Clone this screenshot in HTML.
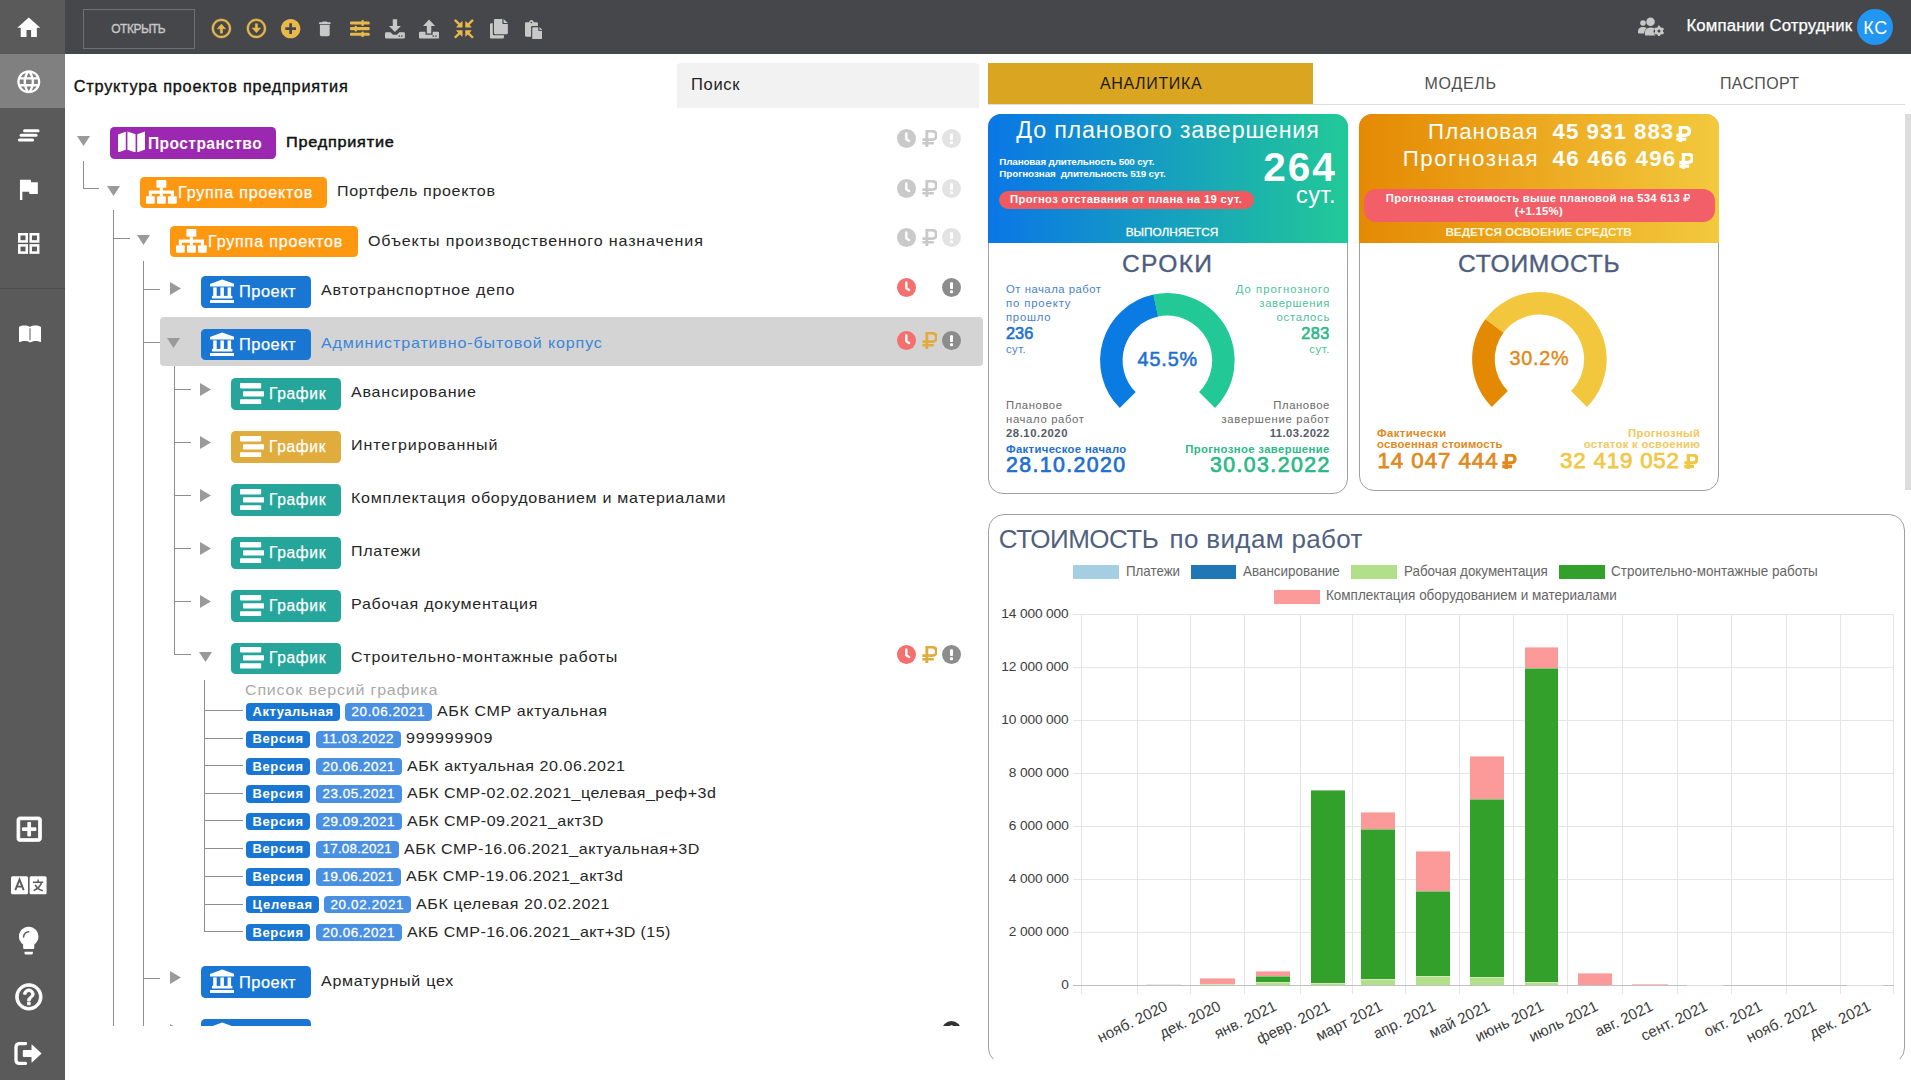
<!DOCTYPE html>
<html lang="ru"><head><meta charset="utf-8"><title>Структура проектов предприятия</title><style>*{margin:0;padding:0;box-sizing:content-box}
html,body{width:1911px;height:1080px;overflow:hidden;background:#fff}
body{position:relative;font-family:"Liberation Sans",sans-serif}
.b{position:absolute;display:block}
.t{position:absolute;white-space:pre;display:block}
</style></head><body>
<div class="b" style="left:0.00px;top:0.00px;width:1911.00px;height:54.00px;background:#45474b;"></div>
<div class="b" style="left:0.00px;top:0.00px;width:65.00px;height:1080.00px;background:#5a5a5a;"></div>
<div class="b" style="left:0.00px;top:54.00px;width:65.00px;height:54.00px;background:#808080;"></div>
<div class="b" style="left:0.00px;top:288.00px;width:65.00px;height:1.00px;background:#4b4b4b;"></div>
<svg class="b" style="left:14.70px;top:13.55px;" width="27.6" height="27.6" viewBox="0 0 24 24"><path fill="#fff" d="M10 20v-6h4v6h5v-8h3L12 3 2 12h3v8z"/></svg>
<svg class="b" style="left:14.70px;top:67.70px;" width="27.6" height="27.6" viewBox="0 0 24 24"><path fill="#fff" d="M11.99 2C6.47 2 2 6.48 2 12s4.47 10 9.99 10C17.52 22 22 17.52 22 12S17.52 2 11.99 2zm6.93 6h-2.95c-.32-1.25-.78-2.45-1.38-3.56 1.84.63 3.37 1.91 4.33 3.56zM12 4.04c.83 1.2 1.48 2.53 1.91 3.96h-3.82c.43-1.43 1.08-2.76 1.91-3.96zM4.26 14C4.1 13.36 4 12.69 4 12s.1-1.36.26-2h3.38c-.08.66-.14 1.32-.14 2 0 .68.06 1.34.14 2H4.26zm.82 2h2.95c.32 1.25.78 2.45 1.38 3.56-1.84-.63-3.37-1.9-4.33-3.56zm2.95-8H5.08c.96-1.66 2.49-2.93 4.33-3.56C8.81 5.55 8.35 6.75 8.03 8zM12 19.96c-.83-1.2-1.48-2.53-1.91-3.96h3.82c-.43 1.43-1.08 2.76-1.91 3.96zM14.34 14H9.66c-.09-.66-.16-1.32-.16-2 0-.68.07-1.35.16-2h4.68c.09.65.16 1.32.16 2 0 .68-.07 1.34-.16 2zm.25 5.56c.6-1.11 1.06-2.31 1.38-3.56h2.95c-.96 1.65-2.49 2.93-4.33 3.56zM16.36 14c.08-.66.14-1.32.14-2 0-.68-.06-1.34-.14-2h3.38c.16.64.26 1.31.26 2s-.1 1.36-.26 2h-3.38z"/></svg>
<svg class="b" style="left:17.00px;top:128.00px;" width="24" height="15" viewBox="0 0 24 15"><g fill="none" stroke="#fff" stroke-width="3.1" stroke-linecap="round"><path d="M7.6 2.8H21"/><path d="M4.2 7.3H19"/><path d="M2.5 12H15.500"/></g></svg>
<svg class="b" style="left:14.05px;top:175.20px;" width="28.6" height="28.6" viewBox="0 0 24 24"><path fill="#fff" d="M14.4 6L14 4H5v17h2v-7h5.6l.4 2h7V6z"/></svg>
<svg class="b" style="left:18.00px;top:233.00px;" width="22" height="21" viewBox="0 0 22 21"><g fill="none" stroke="#fff" stroke-width="2.5"><rect x="1.250" y="1.250" width="7.5" height="7.2"/><rect x="12.700" y="1.250" width="7.500" height="7.2"/><rect x="1.250" y="12.400" width="7.500" height="7.200"/><rect x="12.700" y="12.400" width="7.500" height="7.200"/></g></svg>
<svg class="b" style="left:17.75px;top:320.50px;" width="24" height="24" viewBox="0 0 24 24"><path fill="#fff" d="M21 5c-1.11-.35-2.33-.5-3.5-.5-1.95 0-4.05.4-5.5 1.5-1.45-1.1-3.55-1.5-5.5-1.5S2.45 4.9 1 6v14.65c0 .25.25.5.5.5.1 0 .15-.05.25-.05C3.1 20.45 5.05 20 6.5 20c1.95 0 4.05.4 5.5 1.5 1.35-.85 3.8-1.5 5.5-1.5 1.65 0 3.35.3 4.75 1.05.1.05.15.05.25.05.25 0 .5-.25.5-.5V6c-.6-.45-1.25-.75-2-1zM11.5 19.2V7.3h1v11.9z"/></svg>
<svg class="b" style="left:12.70px;top:812.60px;" width="32.4" height="32.4" viewBox="0 0 24 24"><path fill="#fff" stroke="#fff" stroke-width="0.700" d="M19 3H5c-1.11 0-2 .9-2 2v14c0 1.1.89 2 2 2h14c1.1 0 2-.9 2-2V5c0-1.1-.9-2-2-2zm0 16H5V5h14v14zm-8-2h2v-4h4v-2h-4V7h-2v4H7v2h4z"/></svg>
<svg class="b" style="left:11.00px;top:875.50px;" width="36" height="19" viewBox="0 0 36 19"><rect x="0" y="0.300" width="17" height="18" rx="1.500" fill="#fff"/><rect x="18.600" y="0.300" width="17" height="18" rx="1.500" fill="#fff"/><path d="M4.300 14.200L8.500 3.600L12.700 14.200M5.800 10.600H11.200" fill="none" stroke="#5a5a5a" stroke-width="1.900"/><g fill="none" stroke="#5a5a5a" stroke-width="1.500"><path d="M22 6.300H32.200M27.100 3.500V6.300M30.600 6.300C29.600 10 26.500 13 22.600 14.600M24.200 8.800C25.500 11.500 28.500 13.800 31.800 14.800"/></g></svg>
<svg class="b" style="left:11.90px;top:924.40px;" width="33.4" height="33.4" viewBox="0 0 24 24"><path fill="#fff" d="M9 21c0 .55.45 1 1 1h4c.55 0 1-.45 1-1v-1H9v1zm3-19C8.14 2 5 5.14 5 9c0 2.38 1.19 4.47 3 5.74V17c0 .55.45 1 1 1h6c.55 0 1-.45 1-1v-2.26c1.81-1.27 3-3.36 3-5.74 0-3.86-3.14-7-7-7z"/><path d="M8.300 9.300A3.800 3.800 0 0 1 12.100 5.500" stroke="#5a5a5a" stroke-width="1.100" fill="none" stroke-linecap="round"/><path d="M9 18.900H15" stroke="#5a5a5a" stroke-width="0.700"/></svg>
<svg class="b" style="left:12.70px;top:981.40px;" width="31.7" height="31.7" viewBox="0 0 24 24"><path fill="#fff" stroke="#fff" stroke-width="0.700" d="M11 18h2v-2h-2v2zm1-16C6.48 2 2 6.48 2 12s4.48 10 10 10 10-4.48 10-10S17.52 2 12 2zm0 18c-4.41 0-8-3.59-8-8s3.59-8 8-8 8 3.59 8 8-3.59 8-8 8zm0-14c-2.21 0-4 1.79-4 4h2c0-1.1.9-2 2-2s2 .9 2 2c0 2-3 1.75-3 5h2c0-2.25 3-2.5 3-5 0-2.21-1.79-4-4-4z"/></svg>
<svg class="b" style="left:14.00px;top:1042.00px;" width="29" height="23" viewBox="0 0 29 23"><path d="M11.500 1.600H5.500Q2 1.600 2 5.100V17.900Q2 21.400 5.500 21.400H11.500" fill="none" stroke="#fff" stroke-width="3.300" stroke-linecap="round"/><path d="M9.800 8H17.500V3.200Q17.500 2 18.500 2.900L27.600 11.500L18.500 20.100Q17.500 21 17.500 19.800V15H9.800Q8.800 15 8.800 14V9Q8.800 8 9.800 8Z" fill="#fff"/></svg>
<div class="b" style="left:83px;top:9px;width:110px;height:37.500px;border:1px solid #6e7073"></div>
<span class="t" style="left:111.25px;top:23.00px;font-size:12px;line-height:12px;color:#c8c8c8;letter-spacing:-0.498px;-webkit-text-stroke:0.35px #c8c8c8;">ОТКРЫТЬ</span>
<svg class="b" style="left:209.90px;top:17.20px;" width="22.8" height="22.8" viewBox="0 0 24 24"><path fill="#e8b84b" stroke="#e8b84b" stroke-width="0.500" d="M12 20c-4.41 0-8-3.59-8-8s3.590-8 8-8 8 3.590 8 8-3.590 8-8 8m0 2c5.520 0 10-4.480 10-10S17.520 2 12 2 2 6.480 2 12s4.480 10 10 10zm-1.200-9.500V17h2.400v-4.500h3.300L12 7.500l-4.500 5h3.300z"/></svg>
<svg class="b" style="left:244.85px;top:17.20px;" width="22.8" height="22.8" viewBox="0 0 24 24"><path fill="#e8b84b" stroke="#e8b84b" stroke-width="0.500" d="M12 4c4.410 0 8 3.590 8 8s-3.590 8-8 8-8-3.590-8-8 3.590-8 8-8m0-2C6.480 2 2 6.480 2 12s4.480 10 10 10 10-4.480 10-10S17.520 2 12 2zm1.200 9.500V7h-2.400v4.500H7.500l4.500 5 4.500-5h-3.300z"/></svg>
<svg class="b" style="left:279.05px;top:16.95px;" width="23.3" height="23.3" viewBox="0 0 24 24"><path fill="#e8b84b" d="M12 2C6.48 2 2 6.48 2 12s4.48 10 10 10 10-4.480 10-10S17.520 2 12 2zm5.500 11.400h-4.100v4.100h-2.800v-4.100H6.500v-2.800h4.100V6.500h2.800v4.100h4.100v2.800z"/></svg>
<svg class="b" style="left:314.90px;top:18.65px;" width="19.6" height="19.6" viewBox="0 0 24 24"><path fill="#c8c8c8" d="M6 19c0 1.100.9 2 2 2h8c1.100 0 2-.9 2-2V7H6v12zM19 4h-3.500l-1-1h-5l-1 1H5v2h14V4z"/></svg>
<svg class="b" style="left:350.30px;top:19.70px;" width="19.7" height="17.3" viewBox="0 0 21.500 17" preserveAspectRatio="none"><g fill="#e8b84b"><rect x="0" y="1.400" width="21.500" height="3" rx="1.200"/><rect x="0" y="7" width="21.500" height="3" rx="1.200"/><rect x="0" y="12.600" width="21.500" height="3" rx="1.200"/><rect x="12.500" y="0" width="2.600" height="5.800" rx="1"/><rect x="5" y="5.600" width="2.600" height="5.800" rx="1"/><rect x="12.500" y="11.200" width="2.600" height="5.800" rx="1"/></g></svg>
<svg class="b" style="left:385.00px;top:19.30px;" width="19.9" height="19.5" viewBox="0 0 21 21" preserveAspectRatio="none"><g fill="#c8c8c8"><path d="M8.200 0.300H12.800V7.500H16.800L10.500 14L4.200 7.500H8.200Z"/><path d="M1.200 14.300H5.800L8.500 17H12.500L15.200 14.300H19.800Q21 14.300 21 15.500V19.800Q21 21 19.800 21H1.200Q0 21 0 19.800V15.500Q0 14.300 1.200 14.300Z"/></g><circle cx="17.800" cy="18.300" r="0.900" fill="#45474b"/><circle cx="15" cy="18.300" r="0.900" fill="#45474b"/></svg>
<svg class="b" style="left:419.30px;top:19.30px;" width="20.1" height="19.5" viewBox="0 0 21 21" preserveAspectRatio="none"><g fill="#c8c8c8"><path d="M8.200 15.500H12.800V7.500H16.800L10.500 0.500L4.200 7.500H8.200Z"/><path d="M1.200 13.800H6.700V17H14.300V13.800H19.800Q21 13.800 21 15V19.800Q21 21 19.800 21H1.200Q0 21 0 19.800V15Q0 13.800 1.200 13.800Z"/></g><circle cx="17.800" cy="18.300" r="0.900" fill="#45474b"/><circle cx="15" cy="18.300" r="0.900" fill="#45474b"/></svg>
<svg class="b" style="left:454.30px;top:19.20px;" width="19.8" height="19.6" viewBox="0 0 20 20" preserveAspectRatio="none"><g fill="#e8b84b"><path d="M0 1.700L1.700 0L6 4.300L7.800 2.500Q8.600 1.800 8.600 2.900V8.600H2.900Q1.800 8.600 2.500 7.800L4.300 6Z"/><path d="M20 1.700L18.300 0L14 4.300L12.200 2.500Q11.400 1.800 11.400 2.900V8.600H17.100Q18.200 8.600 17.500 7.800L15.700 6Z"/><path d="M0 18.300L1.700 20L6 15.700L7.800 17.500Q8.600 18.200 8.600 17.100V11.400H2.900Q1.800 11.400 2.500 12.200L4.300 14Z"/><path d="M20 18.300L18.300 20L14 15.700L12.200 17.500Q11.400 18.200 11.400 17.100V11.400H17.100Q18.200 11.400 17.500 12.200L15.700 14Z"/></g></svg>
<svg class="b" style="left:490.00px;top:19.30px;" width="17.9" height="19.5" viewBox="0 0 18.500 21" preserveAspectRatio="none"><g fill="#c8c8c8"><path d="M5.200 0H12.800V4.600Q12.800 5.300 13.500 5.300H18.500V15.200Q18.500 16.300 17.400 16.300H5.200Q4.100 16.300 4.100 15.200V1.100Q4.100 0 5.200 0Z"/><path d="M14 0L18.500 4.200H14.500Q14 4.200 14 3.700Z"/><path d="M0 5.800Q0 4.700 1.100 4.700H2.900V16.300Q2.900 17.500 4.100 17.500H14.400V19.900Q14.400 21 13.300 21H1.100Q0 21 0 19.900Z"/></g></svg>
<svg class="b" style="left:524.60px;top:19.90px;" width="17.6" height="19.2" viewBox="0 0 18 21" preserveAspectRatio="none"><g fill="#c8c8c8"><path d="M1.100 2.500H4.200Q4.600 0 6.600 0Q8.600 0 9 2.500H12.100Q13.200 2.500 13.200 3.600V6.500H7.400Q6.200 6.500 6.200 7.700V18.200H1.100Q0 18.200 0 17.100V3.600Q0 2.500 1.100 2.500Z"/><path d="M8.500 7.800H13.600V11.300Q13.600 12 14.300 12H18V19.900Q18 21 16.900 21H8.500Q7.400 21 7.400 19.900V8.900Q7.400 7.800 8.500 7.800Z"/><path d="M14.800 7.800L18 10.900H15.300Q14.800 10.900 14.800 10.400Z"/></g><circle cx="6.600" cy="2.700" r="0.900" fill="#45474b"/></svg>
<svg class="b" style="left:1637.50px;top:17.00px;" width="26" height="19" viewBox="0 0 26 19"><g fill="#c8c8c8"><circle cx="5" cy="6" r="2.800"/><path d="M0 14.500Q0 10 5 10Q7.500 10 8.500 11.200Q6 13 6 16.500H1Q0 16.500 0 15.500Z"/><circle cx="12.500" cy="4.800" r="4.300"/><path d="M6.800 16.800Q6.800 10.500 12.500 10.500Q15 10.500 16.500 11.600Q15.200 13.500 15.800 15.800Q16.300 17.300 17.500 18.500H8Q6.800 18.500 6.800 17.300Z"/><circle cx="21" cy="14" r="4" /><g stroke="#c8c8c8" stroke-width="2.200"><path d="M21 8.800V19.200M16.500 11.400L25.500 16.600M16.500 16.600L25.500 11.400"/></g></g><circle cx="21" cy="14" r="1.500" fill="#45474b"/></svg>
<span class="t" style="left:1686.40px;top:18.00px;font-size:16.8px;line-height:16.8px;color:#fff;letter-spacing:0.138px;-webkit-text-stroke:0.25px #fff;">Компании Сотрудник</span>
<div class="b" style="left:1857.20px;top:8.80px;width:36.00px;height:36.00px;background:#2196f3;border-radius:18px;"></div>
<span class="t" style="left:1863.20px;top:19.30px;font-size:18px;line-height:18px;color:#fff;letter-spacing:0.718px;">КС</span>
<span class="t" style="left:73.75px;top:78.45px;font-size:16.3px;line-height:16.3px;color:#111;letter-spacing:0.767px;-webkit-text-stroke:0.35px #111;">Структура проектов предприятия</span>
<div class="b" style="left:677.00px;top:63.00px;width:301.50px;height:44.50px;background:#f2f2f2;border-radius:4px 4px 0 0;"></div>
<span class="t" style="left:691.00px;top:75.75px;font-size:16.5px;line-height:16.5px;color:#222;letter-spacing:0.695px;">Поиск</span>
<div class="b" style="left:65px;top:110px;width:920px;height:915.500px;overflow:hidden"><div class="b" style="left:-65px;top:-110px;width:1911px;height:1080px">
<div class="b" style="left:160.00px;top:316.50px;width:823.00px;height:49.00px;background:#d4d4d4;border-radius:4px;"></div>
<div class="b" style="left:83.00px;top:161.00px;width:1.00px;height:27.50px;background:#8e8e8e;"></div>
<div class="b" style="left:83.50px;top:188.00px;width:15.00px;height:1.00px;background:#8e8e8e;"></div>
<div class="b" style="left:113.00px;top:210.00px;width:1.00px;height:820.00px;background:#8e8e8e;"></div>
<div class="b" style="left:113.50px;top:238.00px;width:16.00px;height:1.00px;background:#8e8e8e;"></div>
<div class="b" style="left:143.00px;top:260.50px;width:1.00px;height:769.50px;background:#8e8e8e;"></div>
<div class="b" style="left:143.50px;top:288.50px;width:16.50px;height:1.00px;background:#8e8e8e;"></div>
<div class="b" style="left:143.50px;top:341.50px;width:16.50px;height:1.00px;background:#8e8e8e;"></div>
<div class="b" style="left:143.50px;top:978.00px;width:16.50px;height:1.00px;background:#8e8e8e;"></div>
<div class="b" style="left:174.00px;top:366.00px;width:1.00px;height:288.50px;background:#8e8e8e;"></div>
<div class="b" style="left:174.50px;top:388.50px;width:16.25px;height:1.00px;background:#8e8e8e;"></div>
<div class="b" style="left:174.50px;top:441.50px;width:16.25px;height:1.00px;background:#8e8e8e;"></div>
<div class="b" style="left:174.50px;top:494.50px;width:16.25px;height:1.00px;background:#8e8e8e;"></div>
<div class="b" style="left:174.50px;top:547.50px;width:16.25px;height:1.00px;background:#8e8e8e;"></div>
<div class="b" style="left:174.50px;top:600.50px;width:16.25px;height:1.00px;background:#8e8e8e;"></div>
<div class="b" style="left:174.50px;top:654.00px;width:16.25px;height:1.00px;background:#8e8e8e;"></div>
<div class="b" style="left:204.00px;top:680.00px;width:1.00px;height:251.50px;background:#8e8e8e;"></div>
<div class="b" style="left:204.50px;top:710.00px;width:38.00px;height:1.00px;background:#8e8e8e;"></div>
<div class="b" style="left:204.50px;top:737.50px;width:38.00px;height:1.00px;background:#8e8e8e;"></div>
<div class="b" style="left:204.50px;top:765.00px;width:38.00px;height:1.00px;background:#8e8e8e;"></div>
<div class="b" style="left:204.50px;top:792.75px;width:38.00px;height:1.00px;background:#8e8e8e;"></div>
<div class="b" style="left:204.50px;top:820.25px;width:38.00px;height:1.00px;background:#8e8e8e;"></div>
<div class="b" style="left:204.50px;top:848.00px;width:38.00px;height:1.00px;background:#8e8e8e;"></div>
<div class="b" style="left:204.50px;top:875.75px;width:38.00px;height:1.00px;background:#8e8e8e;"></div>
<div class="b" style="left:204.50px;top:903.50px;width:38.00px;height:1.00px;background:#8e8e8e;"></div>
<div class="b" style="left:204.50px;top:931.00px;width:38.00px;height:1.00px;background:#8e8e8e;"></div>
<svg class="b" style="left:76.80px;top:136.00px;" width="13" height="10" viewBox="0 0 13 10"><path d="M0 0H13L6.500 10Z" fill="#9a9a9a"/></svg>
<svg class="b" style="left:107.00px;top:185.50px;" width="13" height="10" viewBox="0 0 13 10"><path d="M0 0H13L6.500 10Z" fill="#9a9a9a"/></svg>
<svg class="b" style="left:137.00px;top:234.50px;" width="13" height="10" viewBox="0 0 13 10"><path d="M0 0H13L6.500 10Z" fill="#9a9a9a"/></svg>
<svg class="b" style="left:170.00px;top:282.00px;" width="11" height="13" viewBox="0 0 11 13"><path d="M0 0V13L11 6.500Z" fill="#9a9a9a"/></svg>
<svg class="b" style="left:167.00px;top:337.50px;" width="13" height="10" viewBox="0 0 13 10"><path d="M0 0H13L6.500 10Z" fill="#9a9a9a"/></svg>
<svg class="b" style="left:200.00px;top:382.90px;" width="11" height="13" viewBox="0 0 11 13"><path d="M0 0V13L11 6.500Z" fill="#9a9a9a"/></svg>
<svg class="b" style="left:200.00px;top:435.90px;" width="11" height="13" viewBox="0 0 11 13"><path d="M0 0V13L11 6.500Z" fill="#9a9a9a"/></svg>
<svg class="b" style="left:200.00px;top:488.90px;" width="11" height="13" viewBox="0 0 11 13"><path d="M0 0V13L11 6.500Z" fill="#9a9a9a"/></svg>
<svg class="b" style="left:200.00px;top:541.90px;" width="11" height="13" viewBox="0 0 11 13"><path d="M0 0V13L11 6.500Z" fill="#9a9a9a"/></svg>
<svg class="b" style="left:200.00px;top:594.90px;" width="11" height="13" viewBox="0 0 11 13"><path d="M0 0V13L11 6.500Z" fill="#9a9a9a"/></svg>
<svg class="b" style="left:198.75px;top:652.00px;" width="13" height="10" viewBox="0 0 13 10"><path d="M0 0H13L6.500 10Z" fill="#9a9a9a"/></svg>
<svg class="b" style="left:170.00px;top:970.75px;" width="11" height="13" viewBox="0 0 11 13"><path d="M0 0V13L11 6.500Z" fill="#9a9a9a"/></svg>
<svg class="b" style="left:170.00px;top:1023.50px;" width="11" height="13" viewBox="0 0 11 13"><path d="M0 0V13L11 6.500Z" fill="#9a9a9a"/></svg>
<div class="b" style="left:110.00px;top:127.00px;width:165.80px;height:31.50px;background:#9c27b0;border-radius:4.5px;"></div>
<svg class="b" style="left:117.5px;top:130.7px" width="27" height="21.8" viewBox="0 0 21.5 20" preserveAspectRatio="none"><g fill="#fff"><path d="M0 3.200L6.200 0.600V17.200L0 19.800Z"/><path d="M7.500 0.500L14 3V19.700L7.500 17.200Z"/><path d="M15.300 3L21.500 0.400V17L15.300 19.700Z"/></g></svg>
<span class="t" style="left:147.50px;top:134.95px;font-size:17.3px;line-height:17.3px;color:#fff;letter-spacing:0.477px;font-weight:bold;transform:scaleX(0.9000);transform-origin:0 0;">Пространство</span>
<span class="t" style="left:285.50px;top:135.10px;font-size:14.8px;line-height:14.8px;color:#111;letter-spacing:0.678px;-webkit-text-stroke:0.45px #111;transform:scaleX(1.1000);transform-origin:0 0;">Предприятие</span>
<div class="b" style="left:140.30px;top:177.00px;width:186.40px;height:31.00px;background:#ff9811;border-radius:4.5px;"></div>
<svg class="b" style="left:146.25px;top:180.00px;" width="30.75" height="23.75" viewBox="0 0 26 20"><g fill="#fff"><rect x="8.800" y="0" width="8.400" height="6.600" rx="0.800"/><rect x="0" y="13.800" width="7.400" height="6.200" rx="0.800"/><rect x="9.300" y="13.800" width="7.400" height="6.200" rx="0.800"/><rect x="18.600" y="13.800" width="7.400" height="6.200" rx="0.800"/><path d="M11.700 6.600H14.300V8.900H23.600V13.800H21V11.500H14.300V13.800H11.700V11.500H5V13.800H2.400V8.900H11.700Z"/></g></svg>
<span class="t" style="left:178.00px;top:183.85px;font-size:17.3px;line-height:17.3px;color:#fff;letter-spacing:0.889px;-webkit-text-stroke:0.25px #fff;transform:scaleX(0.9300);transform-origin:0 0;">Группа проектов</span>
<span class="t" style="left:337.00px;top:184.10px;font-size:14.6px;line-height:14.6px;color:#262626;letter-spacing:0.593px;transform:scaleX(1.1000);transform-origin:0 0;">Портфель проектов</span>
<div class="b" style="left:170.20px;top:226.20px;width:187.60px;height:31.30px;background:#ff9811;border-radius:4.5px;"></div>
<svg class="b" style="left:176.25px;top:229.20px;" width="30.75" height="23.75" viewBox="0 0 26 20"><g fill="#fff"><rect x="8.800" y="0" width="8.400" height="6.600" rx="0.800"/><rect x="0" y="13.800" width="7.400" height="6.200" rx="0.800"/><rect x="9.300" y="13.800" width="7.400" height="6.200" rx="0.800"/><rect x="18.600" y="13.800" width="7.400" height="6.200" rx="0.800"/><path d="M11.700 6.600H14.300V8.900H23.600V13.800H21V11.500H14.300V13.800H11.700V11.500H5V13.800H2.400V8.900H11.700Z"/></g></svg>
<span class="t" style="left:208.00px;top:233.15px;font-size:17.3px;line-height:17.3px;color:#fff;letter-spacing:0.889px;-webkit-text-stroke:0.25px #fff;transform:scaleX(0.9300);transform-origin:0 0;">Группа проектов</span>
<span class="t" style="left:367.50px;top:234.10px;font-size:14.6px;line-height:14.6px;color:#262626;letter-spacing:0.795px;transform:scaleX(1.1000);transform-origin:0 0;">Объекты производственного назначения</span>
<div class="b" style="left:201.00px;top:276.00px;width:109.75px;height:31.50px;background:#1976d2;border-radius:4.5px;"></div>
<svg class="b" style="left:210.00px;top:278.70px;" width="24.4" height="24.4" viewBox="0 0 24.400 23.600"><g fill="#fff"><path d="M12.200 0L24.400 4.600V7H0V4.600Z"/><rect x="3.200" y="8" width="3.500" height="9.500"/><rect x="10.400" y="8" width="3.500" height="9.500"/><rect x="17.600" y="8" width="3.500" height="9.500"/><rect x="2" y="16.500" width="20.400" height="2.600"/><rect x="0" y="20.600" width="24.400" height="3" rx="0.600"/></g></svg>
<span class="t" style="left:239.25px;top:283.35px;font-size:17.3px;line-height:17.3px;color:#fff;letter-spacing:0.518px;-webkit-text-stroke:0.25px #fff;transform:scaleX(0.9500);transform-origin:0 0;">Проект</span>
<span class="t" style="left:321.00px;top:282.95px;font-size:14.6px;line-height:14.6px;color:#262626;letter-spacing:0.729px;transform:scaleX(1.1000);transform-origin:0 0;">Автотранспортное депо</span>
<div class="b" style="left:201.00px;top:328.90px;width:109.75px;height:31.50px;background:#1976d2;border-radius:4.5px;"></div>
<svg class="b" style="left:210.00px;top:331.60px;" width="24.4" height="24.4" viewBox="0 0 24.400 23.600"><g fill="#fff"><path d="M12.200 0L24.400 4.600V7H0V4.600Z"/><rect x="3.200" y="8" width="3.500" height="9.500"/><rect x="10.400" y="8" width="3.500" height="9.500"/><rect x="17.600" y="8" width="3.500" height="9.500"/><rect x="2" y="16.500" width="20.400" height="2.600"/><rect x="0" y="20.600" width="24.400" height="3" rx="0.600"/></g></svg>
<span class="t" style="left:239.25px;top:336.25px;font-size:17.3px;line-height:17.3px;color:#fff;letter-spacing:0.518px;-webkit-text-stroke:0.25px #fff;transform:scaleX(0.9500);transform-origin:0 0;">Проект</span>
<span class="t" style="left:321.00px;top:335.85px;font-size:14.6px;line-height:14.6px;color:#3a86d8;letter-spacing:0.782px;transform:scaleX(1.1000);transform-origin:0 0;">Административно-бытовой корпус</span>
<div class="b" style="left:201.00px;top:966.20px;width:109.75px;height:31.50px;background:#1976d2;border-radius:4.5px;"></div>
<svg class="b" style="left:210.00px;top:968.90px;" width="24.4" height="24.4" viewBox="0 0 24.400 23.600"><g fill="#fff"><path d="M12.200 0L24.400 4.600V7H0V4.600Z"/><rect x="3.200" y="8" width="3.500" height="9.500"/><rect x="10.400" y="8" width="3.500" height="9.500"/><rect x="17.600" y="8" width="3.500" height="9.500"/><rect x="2" y="16.500" width="20.400" height="2.600"/><rect x="0" y="20.600" width="24.400" height="3" rx="0.600"/></g></svg>
<span class="t" style="left:239.25px;top:973.55px;font-size:17.3px;line-height:17.3px;color:#fff;letter-spacing:0.518px;-webkit-text-stroke:0.25px #fff;transform:scaleX(0.9500);transform-origin:0 0;">Проект</span>
<span class="t" style="left:321.00px;top:974.15px;font-size:14.6px;line-height:14.6px;color:#262626;letter-spacing:0.646px;transform:scaleX(1.1000);transform-origin:0 0;">Арматурный цех</span>
<div class="b" style="left:201.00px;top:1019.00px;width:109.75px;height:31.00px;background:#1976d2;border-radius:4.5px;"></div>
<svg class="b" style="left:210.00px;top:1021.70px;" width="24.4" height="24.4" viewBox="0 0 24.400 23.600"><g fill="#fff"><path d="M12.200 0L24.400 4.600V7H0V4.600Z"/><rect x="3.200" y="8" width="3.500" height="9.500"/><rect x="10.400" y="8" width="3.500" height="9.500"/><rect x="17.600" y="8" width="3.500" height="9.500"/><rect x="2" y="16.500" width="20.400" height="2.600"/><rect x="0" y="20.600" width="24.400" height="3" rx="0.600"/></g></svg>
<div class="b" style="left:231.00px;top:378.00px;width:109.75px;height:31.50px;background:#26a69a;border-radius:4.5px;"></div>
<svg class="b" style="left:240.00px;top:382.50px;" width="24.2" height="21.5" viewBox="0 0 24.200 21.500"><g fill="#fff"><rect x="0" y="0" width="21.200" height="5.400" rx="0.800"/><rect x="3" y="8.200" width="21.200" height="5.400" rx="0.800"/><rect x="0" y="16.300" width="21.200" height="5.200" rx="0.800"/></g></svg>
<span class="t" style="left:269.25px;top:384.95px;font-size:17.3px;line-height:17.3px;color:#fff;letter-spacing:0.735px;-webkit-text-stroke:0.25px #fff;transform:scaleX(0.9000);transform-origin:0 0;">График</span>
<span class="t" style="left:350.50px;top:384.95px;font-size:14.6px;line-height:14.6px;color:#262626;letter-spacing:0.698px;transform:scaleX(1.1000);transform-origin:0 0;">Авансирование</span>
<div class="b" style="left:231.00px;top:431.00px;width:109.75px;height:31.50px;background:#e0ac3e;border-radius:4.5px;"></div>
<svg class="b" style="left:240.00px;top:435.50px;" width="24.2" height="21.5" viewBox="0 0 24.200 21.500"><g fill="#fff"><rect x="0" y="0" width="21.200" height="5.400" rx="0.800"/><rect x="3" y="8.200" width="21.200" height="5.400" rx="0.800"/><rect x="0" y="16.300" width="21.200" height="5.200" rx="0.800"/></g></svg>
<span class="t" style="left:269.25px;top:437.95px;font-size:17.3px;line-height:17.3px;color:#fff;letter-spacing:0.735px;-webkit-text-stroke:0.25px #fff;transform:scaleX(0.9000);transform-origin:0 0;">График</span>
<span class="t" style="left:350.50px;top:437.95px;font-size:14.6px;line-height:14.6px;color:#262626;letter-spacing:0.832px;transform:scaleX(1.1000);transform-origin:0 0;">Интегрированный</span>
<div class="b" style="left:231.00px;top:484.00px;width:109.75px;height:31.50px;background:#26a69a;border-radius:4.5px;"></div>
<svg class="b" style="left:240.00px;top:488.50px;" width="24.2" height="21.5" viewBox="0 0 24.200 21.500"><g fill="#fff"><rect x="0" y="0" width="21.200" height="5.400" rx="0.800"/><rect x="3" y="8.200" width="21.200" height="5.400" rx="0.800"/><rect x="0" y="16.300" width="21.200" height="5.200" rx="0.800"/></g></svg>
<span class="t" style="left:269.25px;top:490.95px;font-size:17.3px;line-height:17.3px;color:#fff;letter-spacing:0.735px;-webkit-text-stroke:0.25px #fff;transform:scaleX(0.9000);transform-origin:0 0;">График</span>
<span class="t" style="left:350.50px;top:490.95px;font-size:14.6px;line-height:14.6px;color:#262626;letter-spacing:0.654px;transform:scaleX(1.1000);transform-origin:0 0;">Комплектация оборудованием и материалами</span>
<div class="b" style="left:231.00px;top:537.00px;width:109.75px;height:31.50px;background:#26a69a;border-radius:4.5px;"></div>
<svg class="b" style="left:240.00px;top:541.50px;" width="24.2" height="21.5" viewBox="0 0 24.200 21.500"><g fill="#fff"><rect x="0" y="0" width="21.200" height="5.400" rx="0.800"/><rect x="3" y="8.200" width="21.200" height="5.400" rx="0.800"/><rect x="0" y="16.300" width="21.200" height="5.200" rx="0.800"/></g></svg>
<span class="t" style="left:269.25px;top:543.95px;font-size:17.3px;line-height:17.3px;color:#fff;letter-spacing:0.735px;-webkit-text-stroke:0.25px #fff;transform:scaleX(0.9000);transform-origin:0 0;">График</span>
<span class="t" style="left:350.50px;top:543.95px;font-size:14.6px;line-height:14.6px;color:#262626;letter-spacing:0.661px;transform:scaleX(1.1000);transform-origin:0 0;">Платежи</span>
<div class="b" style="left:231.00px;top:590.00px;width:109.75px;height:31.50px;background:#26a69a;border-radius:4.5px;"></div>
<svg class="b" style="left:240.00px;top:594.50px;" width="24.2" height="21.5" viewBox="0 0 24.200 21.500"><g fill="#fff"><rect x="0" y="0" width="21.200" height="5.400" rx="0.800"/><rect x="3" y="8.200" width="21.200" height="5.400" rx="0.800"/><rect x="0" y="16.300" width="21.200" height="5.200" rx="0.800"/></g></svg>
<span class="t" style="left:269.25px;top:596.95px;font-size:17.3px;line-height:17.3px;color:#fff;letter-spacing:0.735px;-webkit-text-stroke:0.25px #fff;transform:scaleX(0.9000);transform-origin:0 0;">График</span>
<span class="t" style="left:350.50px;top:596.95px;font-size:14.6px;line-height:14.6px;color:#262626;letter-spacing:0.669px;transform:scaleX(1.1000);transform-origin:0 0;">Рабочая документация</span>
<div class="b" style="left:231.00px;top:642.50px;width:109.75px;height:31.50px;background:#26a69a;border-radius:4.5px;"></div>
<svg class="b" style="left:240.00px;top:647.00px;" width="24.2" height="21.5" viewBox="0 0 24.200 21.500"><g fill="#fff"><rect x="0" y="0" width="21.200" height="5.400" rx="0.800"/><rect x="3" y="8.200" width="21.200" height="5.400" rx="0.800"/><rect x="0" y="16.300" width="21.200" height="5.200" rx="0.800"/></g></svg>
<span class="t" style="left:269.25px;top:649.45px;font-size:17.3px;line-height:17.3px;color:#fff;letter-spacing:0.735px;-webkit-text-stroke:0.25px #fff;transform:scaleX(0.9000);transform-origin:0 0;">График</span>
<span class="t" style="left:350.50px;top:650.45px;font-size:14.6px;line-height:14.6px;color:#262626;letter-spacing:0.680px;transform:scaleX(1.1000);transform-origin:0 0;">Строительно-монтажные работы</span>
<span class="t" style="left:245.00px;top:682.85px;font-size:14.6px;line-height:14.6px;color:#aaa;letter-spacing:0.715px;transform:scaleX(1.1000);transform-origin:0 0;">Список версий графика</span>
<div class="b" style="left:246.00px;top:703.20px;width:93.50px;height:17.40px;background:#1976d2;border-radius:4px;"></div>
<span class="t" style="left:252.50px;top:704.80px;font-size:13px;line-height:13px;color:#fff;letter-spacing:0.523px;font-weight:bold;">Актуальная</span>
<div class="b" style="left:345.00px;top:703.20px;width:86.50px;height:17.40px;background:#4a90e2;border-radius:4px;"></div>
<span class="t" style="left:351.50px;top:704.70px;font-size:13.4px;line-height:13.4px;color:#fff;letter-spacing:0.659px;-webkit-text-stroke:0.3px #fff;">20.06.2021</span>
<span class="t" style="left:437.00px;top:704.15px;font-size:14.6px;line-height:14.6px;color:#262626;letter-spacing:0.549px;transform:scaleX(1.1000);transform-origin:0 0;">АБК СМР актуальная</span>
<div class="b" style="left:246.00px;top:730.50px;width:63.50px;height:17.40px;background:#1976d2;border-radius:4px;"></div>
<span class="t" style="left:252.50px;top:732.10px;font-size:13px;line-height:13px;color:#fff;letter-spacing:0.626px;font-weight:bold;">Версия</span>
<div class="b" style="left:316.00px;top:730.50px;width:84.50px;height:17.40px;background:#4a90e2;border-radius:4px;"></div>
<span class="t" style="left:322.50px;top:732.00px;font-size:13.4px;line-height:13.4px;color:#fff;letter-spacing:0.548px;-webkit-text-stroke:0.3px #fff;">11.03.2022</span>
<span class="t" style="left:405.50px;top:731.45px;font-size:14.6px;line-height:14.6px;color:#262626;letter-spacing:0.694px;transform:scaleX(1.1000);transform-origin:0 0;">999999909</span>
<div class="b" style="left:246.00px;top:758.00px;width:63.50px;height:17.40px;background:#1976d2;border-radius:4px;"></div>
<span class="t" style="left:252.50px;top:759.60px;font-size:13px;line-height:13px;color:#fff;letter-spacing:0.626px;font-weight:bold;">Версия</span>
<div class="b" style="left:316.00px;top:758.00px;width:85.50px;height:17.40px;background:#4a90e2;border-radius:4px;"></div>
<span class="t" style="left:322.50px;top:759.50px;font-size:13.4px;line-height:13.4px;color:#fff;letter-spacing:0.548px;-webkit-text-stroke:0.3px #fff;">20.06.2021</span>
<span class="t" style="left:407.00px;top:758.95px;font-size:14.6px;line-height:14.6px;color:#262626;letter-spacing:0.507px;transform:scaleX(1.1000);transform-origin:0 0;">АБК актуальная 20.06.2021</span>
<div class="b" style="left:246.00px;top:785.30px;width:63.50px;height:17.40px;background:#1976d2;border-radius:4px;"></div>
<span class="t" style="left:252.50px;top:786.90px;font-size:13px;line-height:13px;color:#fff;letter-spacing:0.626px;font-weight:bold;">Версия</span>
<div class="b" style="left:316.00px;top:785.30px;width:85.50px;height:17.40px;background:#4a90e2;border-radius:4px;"></div>
<span class="t" style="left:322.50px;top:786.80px;font-size:13.4px;line-height:13.4px;color:#fff;letter-spacing:0.548px;-webkit-text-stroke:0.3px #fff;">23.05.2021</span>
<span class="t" style="left:407.00px;top:786.25px;font-size:14.6px;line-height:14.6px;color:#262626;letter-spacing:0.421px;transform:scaleX(1.1000);transform-origin:0 0;">АБК СМР-02.02.2021_целевая_реф+3d</span>
<div class="b" style="left:246.00px;top:813.00px;width:63.50px;height:17.40px;background:#1976d2;border-radius:4px;"></div>
<span class="t" style="left:252.50px;top:814.60px;font-size:13px;line-height:13px;color:#fff;letter-spacing:0.626px;font-weight:bold;">Версия</span>
<div class="b" style="left:316.00px;top:813.00px;width:85.50px;height:17.40px;background:#4a90e2;border-radius:4px;"></div>
<span class="t" style="left:322.50px;top:814.50px;font-size:13.4px;line-height:13.4px;color:#fff;letter-spacing:0.548px;-webkit-text-stroke:0.3px #fff;">29.09.2021</span>
<span class="t" style="left:407.00px;top:813.95px;font-size:14.6px;line-height:14.6px;color:#262626;letter-spacing:0.426px;transform:scaleX(1.1000);transform-origin:0 0;">АБК СМР-09.2021_акт3D</span>
<div class="b" style="left:246.00px;top:840.80px;width:63.50px;height:17.40px;background:#1976d2;border-radius:4px;"></div>
<span class="t" style="left:252.50px;top:842.40px;font-size:13px;line-height:13px;color:#fff;letter-spacing:0.626px;font-weight:bold;">Версия</span>
<div class="b" style="left:316.00px;top:840.80px;width:82.80px;height:17.40px;background:#4a90e2;border-radius:4px;"></div>
<span class="t" style="left:322.50px;top:842.30px;font-size:13.4px;line-height:13.4px;color:#fff;letter-spacing:0.248px;-webkit-text-stroke:0.3px #fff;">17.08.2021</span>
<span class="t" style="left:404.30px;top:841.75px;font-size:14.6px;line-height:14.6px;color:#262626;letter-spacing:0.459px;transform:scaleX(1.1000);transform-origin:0 0;">АБК СМР-16.06.2021_актуальная+3D</span>
<div class="b" style="left:246.00px;top:868.30px;width:63.50px;height:17.40px;background:#1976d2;border-radius:4px;"></div>
<span class="t" style="left:252.50px;top:869.90px;font-size:13px;line-height:13px;color:#fff;letter-spacing:0.626px;font-weight:bold;">Версия</span>
<div class="b" style="left:316.00px;top:868.30px;width:84.50px;height:17.40px;background:#4a90e2;border-radius:4px;"></div>
<span class="t" style="left:322.50px;top:869.80px;font-size:13.4px;line-height:13.4px;color:#fff;letter-spacing:0.437px;-webkit-text-stroke:0.3px #fff;">19.06.2021</span>
<span class="t" style="left:405.50px;top:869.25px;font-size:14.6px;line-height:14.6px;color:#262626;letter-spacing:0.411px;transform:scaleX(1.1000);transform-origin:0 0;">АБК СМР-19.06.2021_акт3d</span>
<div class="b" style="left:246.00px;top:896.00px;width:72.50px;height:17.40px;background:#1976d2;border-radius:4px;"></div>
<span class="t" style="left:252.50px;top:897.60px;font-size:13px;line-height:13px;color:#fff;letter-spacing:0.777px;font-weight:bold;">Целевая</span>
<div class="b" style="left:324.00px;top:896.00px;width:86.50px;height:17.40px;background:#4a90e2;border-radius:4px;"></div>
<span class="t" style="left:330.50px;top:897.50px;font-size:13.4px;line-height:13.4px;color:#fff;letter-spacing:0.659px;-webkit-text-stroke:0.3px #fff;">20.02.2021</span>
<span class="t" style="left:415.75px;top:896.95px;font-size:14.6px;line-height:14.6px;color:#262626;letter-spacing:0.515px;transform:scaleX(1.1000);transform-origin:0 0;">АБК целевая 20.02.2021</span>
<div class="b" style="left:246.00px;top:924.00px;width:63.50px;height:17.40px;background:#1976d2;border-radius:4px;"></div>
<span class="t" style="left:252.50px;top:925.60px;font-size:13px;line-height:13px;color:#fff;letter-spacing:0.626px;font-weight:bold;">Версия</span>
<div class="b" style="left:316.00px;top:924.00px;width:85.50px;height:17.40px;background:#4a90e2;border-radius:4px;"></div>
<span class="t" style="left:322.50px;top:925.50px;font-size:13.4px;line-height:13.4px;color:#fff;letter-spacing:0.548px;-webkit-text-stroke:0.3px #fff;">20.06.2021</span>
<span class="t" style="left:407.00px;top:924.95px;font-size:14.6px;line-height:14.6px;color:#262626;letter-spacing:0.371px;transform:scaleX(1.1000);transform-origin:0 0;">АКБ СМР-16.06.2021_акт+3D (15)</span>
<svg class="b" style="left:896.90px;top:128.80px;" width="19" height="19" viewBox="0 0 19 19"><circle cx="9.500" cy="9.500" r="9.500" fill="#c9c9c9"/><path d="M9.300 4.400V10.300L12.100 12" fill="none" stroke="#fff" stroke-width="2.400" stroke-linecap="round" stroke-linejoin="round"/></svg>
<svg class="b" style="left:921.60px;top:129.90px;" width="15.47" height="17" viewBox="0 0 86 100" preserveAspectRatio="none"><path d="M27 100V7H54C71 7 80 16 80 32C80 48 71 57 54 57H2M2 78H66" fill="none" stroke="#c9c9c9" stroke-width="16" stroke-linejoin="miter"/></svg>
<svg class="b" style="left:941.90px;top:128.80px;" width="19" height="19" viewBox="0 0 19 19"><circle cx="9.500" cy="9.500" r="9.500" fill="#e3e3e3"/><rect x="8" y="4.300" width="3" height="6.800" rx="0.800" fill="#fff"/><rect x="8" y="12.300" width="3" height="2.900" rx="0.900" fill="#fff"/></svg>
<svg class="b" style="left:896.90px;top:178.80px;" width="19" height="19" viewBox="0 0 19 19"><circle cx="9.500" cy="9.500" r="9.500" fill="#c9c9c9"/><path d="M9.300 4.400V10.300L12.100 12" fill="none" stroke="#fff" stroke-width="2.400" stroke-linecap="round" stroke-linejoin="round"/></svg>
<svg class="b" style="left:921.60px;top:179.90px;" width="15.47" height="17" viewBox="0 0 86 100" preserveAspectRatio="none"><path d="M27 100V7H54C71 7 80 16 80 32C80 48 71 57 54 57H2M2 78H66" fill="none" stroke="#c9c9c9" stroke-width="16" stroke-linejoin="miter"/></svg>
<svg class="b" style="left:941.90px;top:178.80px;" width="19" height="19" viewBox="0 0 19 19"><circle cx="9.500" cy="9.500" r="9.500" fill="#e3e3e3"/><rect x="8" y="4.300" width="3" height="6.800" rx="0.800" fill="#fff"/><rect x="8" y="12.300" width="3" height="2.900" rx="0.900" fill="#fff"/></svg>
<svg class="b" style="left:896.90px;top:227.80px;" width="19" height="19" viewBox="0 0 19 19"><circle cx="9.500" cy="9.500" r="9.500" fill="#c9c9c9"/><path d="M9.300 4.400V10.300L12.100 12" fill="none" stroke="#fff" stroke-width="2.400" stroke-linecap="round" stroke-linejoin="round"/></svg>
<svg class="b" style="left:921.60px;top:228.90px;" width="15.47" height="17" viewBox="0 0 86 100" preserveAspectRatio="none"><path d="M27 100V7H54C71 7 80 16 80 32C80 48 71 57 54 57H2M2 78H66" fill="none" stroke="#c9c9c9" stroke-width="16" stroke-linejoin="miter"/></svg>
<svg class="b" style="left:941.90px;top:227.80px;" width="19" height="19" viewBox="0 0 19 19"><circle cx="9.500" cy="9.500" r="9.500" fill="#e3e3e3"/><rect x="8" y="4.300" width="3" height="6.800" rx="0.800" fill="#fff"/><rect x="8" y="12.300" width="3" height="2.900" rx="0.900" fill="#fff"/></svg>
<svg class="b" style="left:896.90px;top:278.00px;" width="19" height="19" viewBox="0 0 19 19"><circle cx="9.500" cy="9.500" r="9.500" fill="#f56f6f"/><path d="M9.300 4.400V10.300L12.100 12" fill="none" stroke="#fff" stroke-width="2.400" stroke-linecap="round" stroke-linejoin="round"/></svg>
<svg class="b" style="left:941.90px;top:278.00px;" width="19" height="19" viewBox="0 0 19 19"><circle cx="9.500" cy="9.500" r="9.500" fill="#8c8c8c"/><rect x="8" y="4.300" width="3" height="6.800" rx="0.800" fill="#fff"/><rect x="8" y="12.300" width="3" height="2.900" rx="0.900" fill="#fff"/></svg>
<svg class="b" style="left:896.90px;top:331.00px;" width="19" height="19" viewBox="0 0 19 19"><circle cx="9.500" cy="9.500" r="9.500" fill="#f56f6f"/><path d="M9.300 4.400V10.300L12.100 12" fill="none" stroke="#fff" stroke-width="2.400" stroke-linecap="round" stroke-linejoin="round"/></svg>
<svg class="b" style="left:921.60px;top:332.10px;" width="15.47" height="17" viewBox="0 0 86 100" preserveAspectRatio="none"><path d="M27 100V7H54C71 7 80 16 80 32C80 48 71 57 54 57H2M2 78H66" fill="none" stroke="#e0ac3e" stroke-width="16" stroke-linejoin="miter"/></svg>
<svg class="b" style="left:941.90px;top:331.00px;" width="19" height="19" viewBox="0 0 19 19"><circle cx="9.500" cy="9.500" r="9.500" fill="#8c8c8c"/><rect x="8" y="4.300" width="3" height="6.800" rx="0.800" fill="#fff"/><rect x="8" y="12.300" width="3" height="2.900" rx="0.900" fill="#fff"/></svg>
<svg class="b" style="left:896.90px;top:645.00px;" width="19" height="19" viewBox="0 0 19 19"><circle cx="9.500" cy="9.500" r="9.500" fill="#f56f6f"/><path d="M9.300 4.400V10.300L12.100 12" fill="none" stroke="#fff" stroke-width="2.400" stroke-linecap="round" stroke-linejoin="round"/></svg>
<svg class="b" style="left:921.60px;top:646.10px;" width="15.47" height="17" viewBox="0 0 86 100" preserveAspectRatio="none"><path d="M27 100V7H54C71 7 80 16 80 32C80 48 71 57 54 57H2M2 78H66" fill="none" stroke="#e0ac3e" stroke-width="16" stroke-linejoin="miter"/></svg>
<svg class="b" style="left:941.90px;top:645.00px;" width="19" height="19" viewBox="0 0 19 19"><circle cx="9.500" cy="9.500" r="9.500" fill="#8c8c8c"/><rect x="8" y="4.300" width="3" height="6.800" rx="0.800" fill="#fff"/><rect x="8" y="12.300" width="3" height="2.900" rx="0.900" fill="#fff"/></svg>
<svg class="b" style="left:941.90px;top:1021.00px;" width="19" height="19" viewBox="0 0 19 19"><circle cx="9.500" cy="9.500" r="9.500" fill="#333"/><rect x="8" y="4.300" width="3" height="6.800" rx="0.800" fill="#fff"/><rect x="8" y="12.300" width="3" height="2.900" rx="0.900" fill="#fff"/></svg>
</div></div>
<div class="b" style="left:988.00px;top:63.00px;width:324.50px;height:40.80px;background:#daa520;"></div>
<div class="b" style="left:988.00px;top:103.80px;width:917.00px;height:1.00px;background:#dedede;"></div>
<span class="t" style="left:1099.90px;top:75.50px;font-size:16px;line-height:16px;color:#1a1a1a;letter-spacing:0.648px;">АНАЛИТИКА</span>
<span class="t" style="left:1424.55px;top:75.50px;font-size:16px;line-height:16px;color:#505050;letter-spacing:0.714px;">МОДЕЛЬ</span>
<span class="t" style="left:1719.90px;top:75.50px;font-size:16px;line-height:16px;color:#505050;letter-spacing:0.359px;">ПАСПОРТ</span>
<div class="b" style="left:1905.00px;top:114.00px;width:6.00px;height:376.00px;background:#dcdcdc;"></div>
<div class="b" style="left:985px;top:105px;width:921px;height:953.800px;overflow:hidden"><div class="b" style="left:-985px;top:-105px;width:1911px;height:1080px">
<div class="b" style="left:988px;top:114px;width:358px;height:378px;border:1px solid #a0a0a4;border-radius:13px 13px 15px 15px;background:#fff"></div>
<div class="b" style="left:988px;top:114px;width:360px;height:129px;border-radius:13px 13px 0 0;background:linear-gradient(90deg,#0a77e6 0%,#0c7de0 8%,#22c997 100%)"></div>
<span class="t" style="left:1016.30px;top:119.15px;font-size:23.3px;line-height:23.3px;color:#fff;letter-spacing:0.805px;">До планового завершения</span>
<span class="t" style="left:999.30px;top:157.30px;font-size:9.8px;line-height:9.8px;color:#fff;letter-spacing:-0.125px;font-weight:bold;">Плановая длительность 500 сут.</span>
<span class="t" style="left:999.30px;top:168.80px;font-size:9.8px;line-height:9.8px;color:#fff;letter-spacing:-0.037px;font-weight:bold;">Прогнозная</span>
<span class="t" style="left:1060.80px;top:168.80px;font-size:9.8px;line-height:9.8px;color:#fff;letter-spacing:-0.175px;font-weight:bold;">длительность 519 сут.</span>
<div class="b" style="left:999.30px;top:190.50px;width:254.70px;height:18.30px;background:#ee5a5f;border-radius:9.2px;"></div>
<span class="t" style="left:1010.00px;top:193.55px;font-size:11.3px;line-height:11.3px;color:#fff;letter-spacing:0.329px;font-weight:bold;">Прогноз отставания от плана на 19 сут.</span>
<span class="t" style="left:1125.70px;top:226.80px;font-size:11.8px;line-height:11.8px;color:#fff;letter-spacing:-0.025px;-webkit-text-stroke:0.3px #fff;">ВЫПОЛНЯЕТСЯ</span>
<span class="t" style="left:1263.30px;top:147.25px;font-size:40.5px;line-height:40.5px;color:#fff;letter-spacing:2.013px;font-weight:bold;">264</span>
<span class="t" style="left:1296.00px;top:183.90px;font-size:23.6px;line-height:23.6px;color:#fff;letter-spacing:0.383px;">сут.</span>
<span class="t" style="left:1122.00px;top:251.60px;font-size:24.6px;line-height:24.6px;color:#4e5d7e;letter-spacing:1.305px;-webkit-text-stroke:0.35px #4e5d7e;">СРОКИ</span>
<span class="t" style="left:1006.00px;top:283.85px;font-size:11.3px;line-height:11.3px;color:#4a7fd0;letter-spacing:0.512px;">От начала работ</span>
<span class="t" style="left:1006.00px;top:297.85px;font-size:11.3px;line-height:11.3px;color:#4a7fd0;letter-spacing:0.884px;">по проекту</span>
<span class="t" style="left:1006.00px;top:311.85px;font-size:11.3px;line-height:11.3px;color:#4a7fd0;letter-spacing:0.748px;">прошло</span>
<span class="t" style="left:1006.00px;top:324.55px;font-size:16.3px;line-height:16.3px;color:#1e6fd0;letter-spacing:0.052px;-webkit-text-stroke:0.6px #1e6fd0;">236</span>
<span class="t" style="left:1006.00px;top:344.25px;font-size:11.3px;line-height:11.3px;color:#4a7fd0;letter-spacing:0.446px;">сут.</span>
<span class="t" style="left:1235.80px;top:283.85px;font-size:11.3px;line-height:11.3px;color:#4cc29a;letter-spacing:1.017px;">До прогнозного</span>
<span class="t" style="left:1259.30px;top:297.85px;font-size:11.3px;line-height:11.3px;color:#4cc29a;letter-spacing:0.674px;">завершения</span>
<span class="t" style="left:1276.60px;top:311.85px;font-size:11.3px;line-height:11.3px;color:#4cc29a;letter-spacing:0.698px;">осталось</span>
<span class="t" style="left:1301.30px;top:324.55px;font-size:16.3px;line-height:16.3px;color:#2bb888;letter-spacing:0.402px;-webkit-text-stroke:0.6px #2bb888;">283</span>
<span class="t" style="left:1309.30px;top:344.25px;font-size:11.3px;line-height:11.3px;color:#4cc29a;letter-spacing:0.546px;">сут.</span>
<svg class="b" style="left:0.00px;top:0.00px;pointer-events:none" width="1911" height="1080" viewBox="0 0 1911 1080"><path d="M1119.81 407.99A67.3 67.3 0 0 1 1153.58 294.53L1158.20 316.55A44.8 44.8 0 0 0 1135.72 392.08Z" fill="#0a7be2"/><path d="M1153.24 294.61A67.3 67.3 0 0 1 1214.99 407.99L1199.08 392.08A44.8 44.8 0 0 0 1157.97 316.60Z" fill="#22c896"/></svg>
<span class="t" style="left:1137.60px;top:350.00px;font-size:19.8px;line-height:19.8px;color:#1e6fd0;letter-spacing:0.864px;-webkit-text-stroke:0.55px #1e6fd0;">45.5%</span>
<span class="t" style="left:1006.00px;top:399.85px;font-size:11.3px;line-height:11.3px;color:#6a6a6a;letter-spacing:0.576px;">Плановое</span>
<span class="t" style="left:1006.00px;top:414.35px;font-size:11.3px;line-height:11.3px;color:#6a6a6a;letter-spacing:0.650px;">начало работ</span>
<span class="t" style="left:1006.00px;top:428.05px;font-size:11.3px;line-height:11.3px;color:#555b66;letter-spacing:0.549px;font-weight:bold;">28.10.2020</span>
<span class="t" style="left:1006.00px;top:443.85px;font-size:11.3px;line-height:11.3px;color:#1e6fd0;letter-spacing:0.336px;font-weight:bold;">Фактическое начало</span>
<span class="t" style="left:1006.00px;top:455.35px;font-size:21.3px;line-height:21.3px;color:#1e6fd0;letter-spacing:1.399px;-webkit-text-stroke:0.7px #1e6fd0;">28.10.2020</span>
<span class="t" style="left:1273.30px;top:399.85px;font-size:11.3px;line-height:11.3px;color:#6a6a6a;letter-spacing:0.576px;">Плановое</span>
<span class="t" style="left:1221.50px;top:414.35px;font-size:11.3px;line-height:11.3px;color:#6a6a6a;letter-spacing:0.687px;">завершение работ</span>
<span class="t" style="left:1269.80px;top:428.05px;font-size:11.3px;line-height:11.3px;color:#555b66;letter-spacing:0.396px;font-weight:bold;">11.03.2022</span>
<span class="t" style="left:1185.20px;top:443.85px;font-size:11.3px;line-height:11.3px;color:#2bb888;letter-spacing:0.381px;font-weight:bold;">Прогнозное завершение</span>
<span class="t" style="left:1210.00px;top:455.35px;font-size:21.3px;line-height:21.3px;color:#2bb888;letter-spacing:1.410px;-webkit-text-stroke:0.7px #2bb888;">30.03.2022</span>
<div class="b" style="left:1359px;top:114px;width:358px;height:375px;border:1px solid #a0a0a4;border-radius:13px 13px 15px 15px;background:#fff"></div>
<div class="b" style="left:1359px;top:114px;width:360px;height:129px;border-radius:13px 13px 0 0;background:linear-gradient(90deg,#e58903 0%,#f3c93d 100%)"></div>
<span class="t" style="left:1428.10px;top:121.15px;font-size:22.3px;line-height:22.3px;color:#fff;letter-spacing:1.024px;">Плановая</span>
<span class="t" style="left:1552.60px;top:121.15px;font-size:22.3px;line-height:22.3px;color:#fff;letter-spacing:0.999px;font-weight:bold;">45 931 883</span>
<svg class="b" style="left:1675.90px;top:125.50px" width="14.7" height="16.7" viewBox="0 0 86 100" preserveAspectRatio="none"><path d="M26 100V8H52C69 8 78 17 78 32C78 47 69 56 52 56H2M2 79H60" fill="none" stroke="#fff" stroke-width="20"/></svg>
<span class="t" style="left:1402.70px;top:148.35px;font-size:22.3px;line-height:22.3px;color:#fff;letter-spacing:1.594px;">Прогнозная</span>
<span class="t" style="left:1552.60px;top:148.35px;font-size:22.3px;line-height:22.3px;color:#fff;letter-spacing:1.232px;font-weight:bold;">46 466 496</span>
<svg class="b" style="left:1678.60px;top:152.70px" width="14.7" height="16.7" viewBox="0 0 86 100" preserveAspectRatio="none"><path d="M26 100V8H52C69 8 78 17 78 32C78 47 69 56 52 56H2M2 79H60" fill="none" stroke="#fff" stroke-width="20"/></svg>
<div class="b" style="left:1364.00px;top:188.90px;width:350.80px;height:33.00px;background:#f25f68;border-radius:12px;"></div>
<span class="t" style="left:1385.80px;top:192.85px;font-size:11.3px;line-height:11.3px;color:#fff;letter-spacing:0.286px;font-weight:bold;">Прогнозная стоимость выше плановой на 534 613</span>
<svg class="b" style="left:1683.30px;top:194.40px;" width="7.098" height="7.8" viewBox="0 0 86 100" preserveAspectRatio="none"><path d="M27 100V7H54C71 7 80 16 80 32C80 48 71 57 54 57H2M2 78H66" fill="none" stroke="#fff" stroke-width="17" stroke-linejoin="miter"/></svg>
<span class="t" style="left:1514.70px;top:206.25px;font-size:11.3px;line-height:11.3px;color:#fff;letter-spacing:0.262px;font-weight:bold;">(+1.15%)</span>
<span class="t" style="left:1445.40px;top:227.10px;font-size:11.8px;line-height:11.8px;color:#fff6d8;letter-spacing:-0.062px;font-weight:bold;">ВЕДЕТСЯ ОСВОЕНИЕ СРЕДСТВ</span>
<span class="t" style="left:1458.00px;top:251.60px;font-size:24.6px;line-height:24.6px;color:#4e5d7e;letter-spacing:0.796px;-webkit-text-stroke:0.35px #4e5d7e;">СТОИМОСТЬ</span>
<svg class="b" style="left:0.00px;top:0.00px;pointer-events:none" width="1911" height="1080" viewBox="0 0 1911 1080"><path d="M1491.81 406.89A67.3 67.3 0 0 1 1485.54 318.95L1503.63 332.50A44.7 44.7 0 0 0 1507.79 390.91Z" fill="#e38a02"/><path d="M1485.33 319.23A67.3 67.3 0 1 1 1586.99 406.89L1571.01 390.91A44.7 44.7 0 1 0 1503.49 332.69Z" fill="#f3c73d"/></svg>
<span class="t" style="left:1509.60px;top:349.10px;font-size:19.8px;line-height:19.8px;color:#e08a1c;letter-spacing:0.714px;-webkit-text-stroke:0.45px #e08a1c;">30.2%</span>
<span class="t" style="left:1377.00px;top:428.25px;font-size:11.3px;line-height:11.3px;color:#e08a1c;letter-spacing:0.406px;font-weight:bold;">Фактически</span>
<span class="t" style="left:1377.00px;top:439.25px;font-size:11.3px;line-height:11.3px;color:#e08a1c;letter-spacing:0.198px;font-weight:bold;">освоенная стоимость</span>
<span class="t" style="left:1377.50px;top:449.60px;font-size:22.4px;line-height:22.4px;color:#e08a1c;letter-spacing:0.899px;-webkit-text-stroke:0.75px #e08a1c;">14 047 444</span>
<svg class="b" style="left:1502.30px;top:453.50px" width="14.3" height="15.9" viewBox="0 0 86 100" preserveAspectRatio="none"><path d="M26 100V8H52C69 8 78 17 78 32C78 47 69 56 52 56H2M2 79H60" fill="none" stroke="#e08a1c" stroke-width="20"/></svg>
<span class="t" style="left:1628.00px;top:428.25px;font-size:11.3px;line-height:11.3px;color:#f2c860;letter-spacing:0.305px;font-weight:bold;">Прогнозный</span>
<span class="t" style="left:1583.70px;top:439.25px;font-size:11.3px;line-height:11.3px;color:#f2c860;letter-spacing:0.301px;font-weight:bold;">остаток к освоению</span>
<span class="t" style="left:1560.10px;top:449.60px;font-size:22.4px;line-height:22.4px;color:#f2c744;letter-spacing:0.765px;-webkit-text-stroke:0.75px #f2c744;">32 419 052</span>
<svg class="b" style="left:1683.70px;top:453.50px" width="14.3" height="15.9" viewBox="0 0 86 100" preserveAspectRatio="none"><path d="M26 100V8H52C69 8 78 17 78 32C78 47 69 56 52 56H2M2 79H60" fill="none" stroke="#f2c744" stroke-width="20"/></svg>
<div class="b" style="left:988px;top:514px;width:915px;height:548px;border:1px solid #a0a0a4;border-radius:16px;background:#fff"></div>
<span class="t" style="left:998.75px;top:526.00px;font-size:26px;line-height:26px;color:#4f6080;letter-spacing:-0.535px;">СТОИМОСТЬ</span>
<span class="t" style="left:1169.50px;top:526.00px;font-size:26px;line-height:26px;color:#4f6080;letter-spacing:0.351px;">по видам работ</span>
<div class="b" style="left:1073.00px;top:565.00px;width:45.50px;height:13.70px;background:#a6cee3;"></div>
<span class="t" style="left:1125.50px;top:563.65px;font-size:14.5px;line-height:14.5px;color:#666;transform:scaleX(0.9182);transform-origin:0 0;">Платежи</span>
<div class="b" style="left:1190.75px;top:565.00px;width:45.50px;height:13.70px;background:#1f78b4;"></div>
<span class="t" style="left:1243.25px;top:563.65px;font-size:14.5px;line-height:14.5px;color:#666;transform:scaleX(0.9255);transform-origin:0 0;">Авансирование</span>
<div class="b" style="left:1351.25px;top:565.00px;width:45.50px;height:13.70px;background:#b2df8a;"></div>
<span class="t" style="left:1403.75px;top:563.65px;font-size:14.5px;line-height:14.5px;color:#666;transform:scaleX(0.9229);transform-origin:0 0;">Рабочая документация</span>
<div class="b" style="left:1559.25px;top:565.00px;width:45.50px;height:13.70px;background:#33a02c;"></div>
<span class="t" style="left:1611.25px;top:563.65px;font-size:14.5px;line-height:14.5px;color:#666;transform:scaleX(0.9298);transform-origin:0 0;">Строительно-монтажные работы</span>
<div class="b" style="left:1274.25px;top:590.00px;width:45.50px;height:13.70px;background:#fb9a99;"></div>
<span class="t" style="left:1326.25px;top:587.95px;font-size:14.5px;line-height:14.5px;color:#666;transform:scaleX(0.9295);transform-origin:0 0;">Комплектация оборудованием и материалами</span>
<div class="b" style="left:1080.75px;top:614.25px;width:1.00px;height:380.00px;background:#e5e5e8;"></div>
<div class="b" style="left:1137.00px;top:614.25px;width:1.00px;height:380.00px;background:#e5e5e8;"></div>
<div class="b" style="left:1190.00px;top:614.25px;width:1.00px;height:380.00px;background:#e5e5e8;"></div>
<div class="b" style="left:1244.00px;top:614.25px;width:1.00px;height:380.00px;background:#e5e5e8;"></div>
<div class="b" style="left:1300.00px;top:614.25px;width:1.00px;height:380.00px;background:#e5e5e8;"></div>
<div class="b" style="left:1351.75px;top:614.25px;width:1.00px;height:380.00px;background:#e5e5e8;"></div>
<div class="b" style="left:1405.00px;top:614.25px;width:1.00px;height:380.00px;background:#e5e5e8;"></div>
<div class="b" style="left:1458.75px;top:614.25px;width:1.00px;height:380.00px;background:#e5e5e8;"></div>
<div class="b" style="left:1513.00px;top:614.25px;width:1.00px;height:380.00px;background:#e5e5e8;"></div>
<div class="b" style="left:1566.90px;top:614.25px;width:1.00px;height:380.00px;background:#e5e5e8;"></div>
<div class="b" style="left:1621.70px;top:614.25px;width:1.00px;height:380.00px;background:#e5e5e8;"></div>
<div class="b" style="left:1676.70px;top:614.25px;width:1.00px;height:380.00px;background:#e5e5e8;"></div>
<div class="b" style="left:1730.90px;top:614.25px;width:1.00px;height:380.00px;background:#e5e5e8;"></div>
<div class="b" style="left:1785.50px;top:614.25px;width:1.00px;height:380.00px;background:#e5e5e8;"></div>
<div class="b" style="left:1840.10px;top:614.25px;width:1.00px;height:380.00px;background:#e5e5e8;"></div>
<div class="b" style="left:1892.90px;top:614.25px;width:1.00px;height:380.00px;background:#e5e5e8;"></div>
<div class="b" style="left:1073.00px;top:613.75px;width:820.90px;height:1.00px;background:#e5e5e8;"></div>
<div class="b" style="left:1073.00px;top:666.90px;width:820.90px;height:1.00px;background:#e5e5e8;"></div>
<div class="b" style="left:1073.00px;top:719.70px;width:820.90px;height:1.00px;background:#e5e5e8;"></div>
<div class="b" style="left:1073.00px;top:772.60px;width:820.90px;height:1.00px;background:#e5e5e8;"></div>
<div class="b" style="left:1073.00px;top:825.65px;width:820.90px;height:1.00px;background:#e5e5e8;"></div>
<div class="b" style="left:1073.00px;top:878.65px;width:820.90px;height:1.00px;background:#e5e5e8;"></div>
<div class="b" style="left:1073.00px;top:931.60px;width:820.90px;height:1.00px;background:#e5e5e8;"></div>
<div class="b" style="left:1073.00px;top:984.50px;width:820.90px;height:1.00px;background:#c0c0c2;"></div>
<span class="t" style="left:1001.26px;top:607.10px;font-size:13.7px;line-height:13.7px;color:#3c3c3c;letter-spacing:-0.114px;">14 000 000</span>
<span class="t" style="left:1001.26px;top:660.25px;font-size:13.7px;line-height:13.7px;color:#3c3c3c;letter-spacing:-0.114px;">12 000 000</span>
<span class="t" style="left:1001.26px;top:713.05px;font-size:13.7px;line-height:13.7px;color:#3c3c3c;letter-spacing:-0.114px;">10 000 000</span>
<span class="t" style="left:1008.77px;top:765.95px;font-size:13.7px;line-height:13.7px;color:#3c3c3c;letter-spacing:-0.114px;">8 000 000</span>
<span class="t" style="left:1008.77px;top:819.00px;font-size:13.7px;line-height:13.7px;color:#3c3c3c;letter-spacing:-0.114px;">6 000 000</span>
<span class="t" style="left:1008.77px;top:872.00px;font-size:13.7px;line-height:13.7px;color:#3c3c3c;letter-spacing:-0.114px;">4 000 000</span>
<span class="t" style="left:1008.77px;top:924.95px;font-size:13.7px;line-height:13.7px;color:#3c3c3c;letter-spacing:-0.114px;">2 000 000</span>
<span class="t" style="left:1061.18px;top:977.85px;font-size:13.7px;line-height:13.7px;color:#3c3c3c;">0</span>
<div class="b" style="left:1146.25px;top:984.30px;width:35.00px;height:0.70px;background:#ddd;box-shadow:inset 0 1px 0 rgba(255,255,255,.4);"></div>
<div class="b" style="left:1200.00px;top:977.50px;width:34.50px;height:6.40px;background:#fb9a99;box-shadow:inset 0 1px 0 rgba(255,255,255,.4);"></div>
<div class="b" style="left:1200.00px;top:983.90px;width:34.50px;height:1.10px;background:#b2df8a;box-shadow:inset 0 1px 0 rgba(255,255,255,.4);"></div>
<div class="b" style="left:1255.75px;top:970.75px;width:34.25px;height:5.50px;background:#fb9a99;box-shadow:inset 0 1px 0 rgba(255,255,255,.4);"></div>
<div class="b" style="left:1255.75px;top:976.25px;width:34.25px;height:5.75px;background:#33a02c;box-shadow:inset 0 1px 0 rgba(255,255,255,.4);"></div>
<div class="b" style="left:1255.75px;top:982.00px;width:34.25px;height:3.00px;background:#b2df8a;box-shadow:inset 0 1px 0 rgba(255,255,255,.4);"></div>
<div class="b" style="left:1310.75px;top:790.00px;width:34.25px;height:192.50px;background:#33a02c;box-shadow:inset 0 1px 0 rgba(255,255,255,.4);"></div>
<div class="b" style="left:1310.75px;top:982.50px;width:34.25px;height:2.50px;background:#b2df8a;box-shadow:inset 0 1px 0 rgba(255,255,255,.4);"></div>
<div class="b" style="left:1360.50px;top:812.00px;width:34.00px;height:16.75px;background:#fb9a99;box-shadow:inset 0 1px 0 rgba(255,255,255,.4);"></div>
<div class="b" style="left:1360.50px;top:828.75px;width:34.00px;height:150.00px;background:#33a02c;box-shadow:inset 0 1px 0 rgba(255,255,255,.4);"></div>
<div class="b" style="left:1360.50px;top:978.75px;width:34.00px;height:6.25px;background:#b2df8a;box-shadow:inset 0 1px 0 rgba(255,255,255,.4);"></div>
<div class="b" style="left:1415.75px;top:850.50px;width:34.25px;height:40.75px;background:#fb9a99;box-shadow:inset 0 1px 0 rgba(255,255,255,.4);"></div>
<div class="b" style="left:1415.75px;top:891.25px;width:34.25px;height:84.50px;background:#33a02c;box-shadow:inset 0 1px 0 rgba(255,255,255,.4);"></div>
<div class="b" style="left:1415.75px;top:975.75px;width:34.25px;height:9.25px;background:#b2df8a;box-shadow:inset 0 1px 0 rgba(255,255,255,.4);"></div>
<div class="b" style="left:1469.50px;top:755.50px;width:34.00px;height:43.25px;background:#fb9a99;box-shadow:inset 0 1px 0 rgba(255,255,255,.4);"></div>
<div class="b" style="left:1469.50px;top:798.75px;width:34.00px;height:178.45px;background:#33a02c;box-shadow:inset 0 1px 0 rgba(255,255,255,.4);"></div>
<div class="b" style="left:1469.50px;top:977.20px;width:34.00px;height:7.80px;background:#b2df8a;box-shadow:inset 0 1px 0 rgba(255,255,255,.4);"></div>
<div class="b" style="left:1524.50px;top:646.75px;width:33.90px;height:20.85px;background:#fb9a99;box-shadow:inset 0 1px 0 rgba(255,255,255,.4);"></div>
<div class="b" style="left:1524.50px;top:667.60px;width:33.90px;height:314.40px;background:#33a02c;box-shadow:inset 0 1px 0 rgba(255,255,255,.4);"></div>
<div class="b" style="left:1524.50px;top:982.00px;width:33.90px;height:3.00px;background:#b2df8a;box-shadow:inset 0 1px 0 rgba(255,255,255,.4);"></div>
<div class="b" style="left:1577.75px;top:973.25px;width:34.25px;height:11.75px;background:#fb9a99;box-shadow:inset 0 1px 0 rgba(255,255,255,.4);"></div>
<div class="b" style="left:1632.25px;top:983.70px;width:35.25px;height:1.30px;background:#fb9a99;box-shadow:inset 0 1px 0 rgba(255,255,255,.4);"></div>
<div class="b" style="left:1686.75px;top:984.50px;width:36.25px;height:0.50px;background:#ddd;box-shadow:inset 0 1px 0 rgba(255,255,255,.4);"></div>
<div class="b" style="left:1846.75px;top:984.50px;width:36.25px;height:0.50px;background:#ddd;box-shadow:inset 0 1px 0 rgba(255,255,255,.4);"></div>
<span class="t" style="left:1086.95px;top:998.00px;font-size:15.200px;line-height:15.200px;color:#3c3c3c;transform-origin:100% 0;transform:rotate(-26deg)">нояб. 2020</span>
<span class="t" style="left:1150.27px;top:998.00px;font-size:15.200px;line-height:15.200px;color:#3c3c3c;transform-origin:100% 0;transform:rotate(-26deg)">дек. 2020</span>
<span class="t" style="left:1204.54px;top:998.00px;font-size:15.200px;line-height:15.200px;color:#3c3c3c;transform-origin:100% 0;transform:rotate(-26deg)">янв. 2021</span>
<span class="t" style="left:1245.63px;top:998.00px;font-size:15.200px;line-height:15.200px;color:#3c3c3c;transform-origin:100% 0;transform:rotate(-26deg)">февр. 2021</span>
<span class="t" style="left:1305.85px;top:998.00px;font-size:15.200px;line-height:15.200px;color:#3c3c3c;transform-origin:100% 0;transform:rotate(-26deg)">март 2021</span>
<span class="t" style="left:1363.98px;top:998.00px;font-size:15.200px;line-height:15.200px;color:#3c3c3c;transform-origin:100% 0;transform:rotate(-26deg)">апр. 2021</span>
<span class="t" style="left:1419.94px;top:998.00px;font-size:15.200px;line-height:15.200px;color:#3c3c3c;transform-origin:100% 0;transform:rotate(-26deg)">май 2021</span>
<span class="t" style="left:1465.21px;top:998.00px;font-size:15.200px;line-height:15.200px;color:#3c3c3c;transform-origin:100% 0;transform:rotate(-26deg)">июнь 2021</span>
<span class="t" style="left:1519.42px;top:998.00px;font-size:15.200px;line-height:15.200px;color:#3c3c3c;transform-origin:100% 0;transform:rotate(-26deg)">июль 2021</span>
<span class="t" style="left:1586.22px;top:998.00px;font-size:15.200px;line-height:15.200px;color:#3c3c3c;transform-origin:100% 0;transform:rotate(-26deg)">авг. 2021</span>
<span class="t" style="left:1631.31px;top:998.00px;font-size:15.200px;line-height:15.200px;color:#3c3c3c;transform-origin:100% 0;transform:rotate(-26deg)">сент. 2021</span>
<span class="t" style="left:1694.89px;top:998.00px;font-size:15.200px;line-height:15.200px;color:#3c3c3c;transform-origin:100% 0;transform:rotate(-26deg)">окт. 2021</span>
<span class="t" style="left:1736.25px;top:998.00px;font-size:15.200px;line-height:15.200px;color:#3c3c3c;transform-origin:100% 0;transform:rotate(-26deg)">нояб. 2021</span>
<span class="t" style="left:1799.77px;top:998.00px;font-size:15.200px;line-height:15.200px;color:#3c3c3c;transform-origin:100% 0;transform:rotate(-26deg)">дек. 2021</span>
</div></div>
</body></html>
